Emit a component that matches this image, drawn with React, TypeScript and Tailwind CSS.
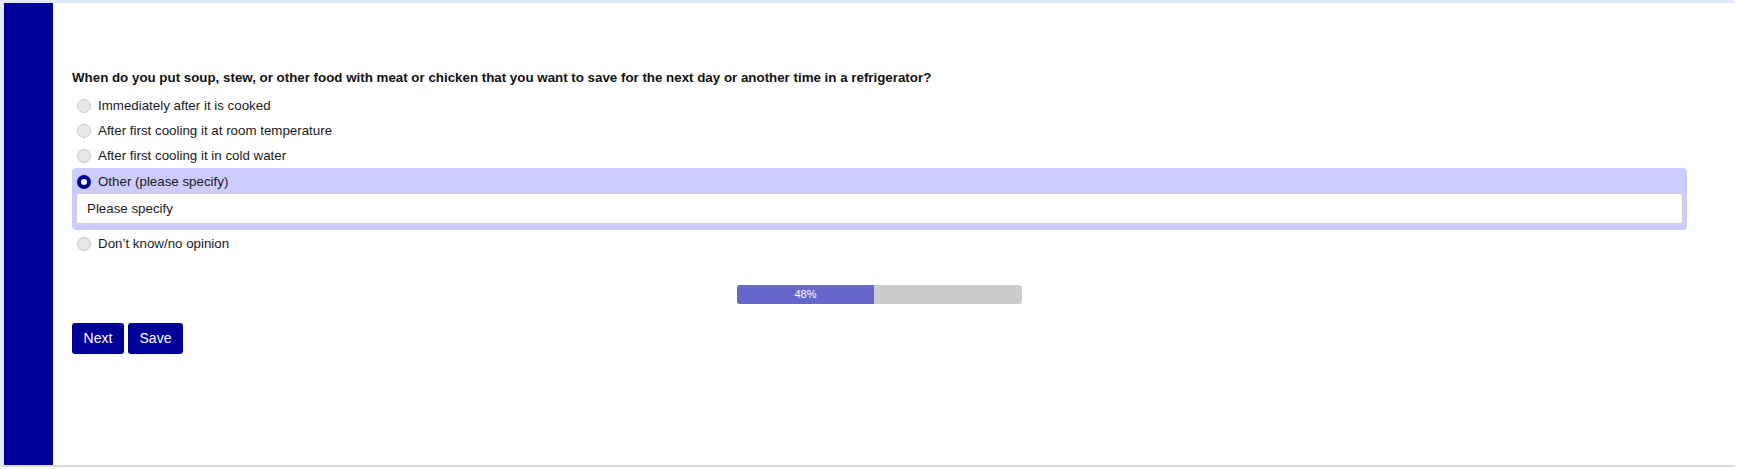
import { useState } from "react";

const options = [
  "Immediately after it is cooked",
  "After first cooling it at room temperature",
  "After first cooling it in cold water",
  "Other (please specify)",
  "Don\u2019t know/no opinion",
];

function Radio({ checked }: { checked: boolean }) {
  if (checked) {
    return <span className="block h-[14px] w-[14px] shrink-0 rounded-full border-[4px] border-[#000099] bg-white" />;
  }
  return <span className="block h-[14px] w-[14px] shrink-0 rounded-full border border-[#c9c9c9] bg-[#e8e8e8]" />;
}

export default function App() {
  const [selected, setSelected] = useState(3);
  const [other, setOther] = useState("");
  const progress = 48;

  return (
    <div className="h-[469px] w-[1737px] bg-white font-['Liberation_Sans',Arial,sans-serif]">
      <div className="flex h-[467px] w-[1735px] border-t-[3px] border-b-2 border-l-4 border-t-[#e2e8f7] border-b-[#d9d9d9] border-l-[#e2e8f7]">
        <div className="w-[49px] shrink-0 bg-[#000099]" />

        <div className="flex-1 pl-[19px] pr-[48px] pt-[67px]">
          <p className="text-[13.33px] leading-[15px] font-bold text-[#111]">
            When do you put soup, stew, or other food with meat or chicken that you want to save for the next day or another time in a refrigerator?
          </p>

          <div className="mt-[8px]">
            {options.map((label, i) => {
              const isOther = i === 3;
              const checked = selected === i;
              const row = (
                <label
                  key={label}
                  onClick={() => setSelected(i)}
                  className={`flex cursor-pointer items-center gap-[7px] text-[13.33px] text-[#1a1a1a] ${
                    isOther ? "h-[23px] pl-[1px]" : "h-[25px] pl-[5px]"
                  }`}
                >
                  <Radio checked={checked} />
                  <span>{label}</span>
                </label>
              );
              if (isOther && checked) {
                return (
                  <div key={label} className="rounded-[4px] bg-[#ccccff] px-[4px] pt-[2px] pb-[6px]">
                    {row}
                    <input
                      value={other}
                      onChange={(e) => setOther(e.target.value)}
                      placeholder="Please specify"
                      className="h-[31px] w-full rounded-[3px] border border-[#cfcfcf] bg-white px-[10px] text-[13.33px] text-[#222] outline-none placeholder:text-[#222]"
                    />
                  </div>
                );
              }
              return (
                <div key={label} className={i === 4 ? "mt-[1px]" : ""}>
                  {row}
                </div>
              );
            })}
          </div>

          <div className="mt-[29px] flex justify-center">
            <div className="flex h-[19px] w-[285px] overflow-hidden rounded-[3px] bg-[#cccccc]">
              <div
                className="flex items-center justify-center bg-[#6666cc] text-[11px] text-white"
                style={{ width: `${progress}%` }}
              >
                {progress}%
              </div>
            </div>
          </div>

          <div className="mt-[19px] flex gap-[4px]">
            <button type="button" className="h-[31px] w-[52px] rounded-[3px] bg-[#000099] text-[14px] text-white">
              Next
            </button>
            <button type="button" className="h-[31px] w-[55px] rounded-[3px] bg-[#000099] text-[14px] text-white">
              Save
            </button>
          </div>
        </div>
      </div>
    </div>
  );
}
